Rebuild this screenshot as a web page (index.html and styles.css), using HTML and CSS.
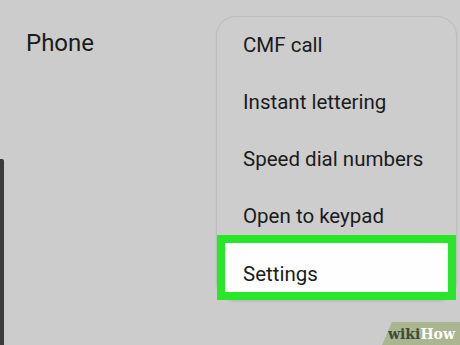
FILE: index.html
```html
<!DOCTYPE html>
<html>
<head>
<meta charset="utf-8">
<link rel="stylesheet" href="styles.css">
</head>
<body>
<div class="screen">
  <div class="side">
    <div class="title">Phone</div>
    <div class="edge"></div>
  </div>
  <div class="menu">
    <div class="item">CMF call</div>
    <div class="item">Instant lettering</div>
    <div class="item">Speed dial numbers</div>
    <div class="item">Open to keypad</div>
    <div class="item selected">Settings</div>
  </div>
  <div class="wm"><span class="wiki">wiki</span><span class="how">How</span></div>
</div>
</body>
</html>
```
FILE: styles.css
```css
html, body {
  margin: 0;
  padding: 0;
}
body {
  background: #cccccc;
  font-family: Roboto, "Liberation Sans", sans-serif;
  color: #1b1b1b;
}
.screen {
  position: relative;
  width: 460px;
  height: 345px;
  overflow: hidden;
  display: grid;
  grid-template-columns: 216px 241px;
  align-items: start;
}
.side {
  height: 345px;
  display: flex;
  flex-direction: column;
}
.title {
  font-size: 24px;
  line-height: 28px;
  padding: 29px 0 0 26px;
}
.edge {
  margin-top: auto;
  width: 4px;
  height: 186px;
  background: #3a3a3a;
  border-radius: 0 2px 0 0;
}
.menu {
  margin-top: 16px;
  background: #cdcdcd;
  border: 1px solid #bdbdbd;
  border-radius: 20px;
  box-shadow: 0 1px 2px rgba(0,0,0,0.08);
}
.item {
  height: 57px;
  line-height: 57px;
  font-size: 20.5px;
  padding-left: 26px;
  white-space: nowrap;
}
.item.selected {
  margin-top: -10px;
  height: 35px;
  line-height: 35px;
  padding-top: 14px;
  padding-left: 18px;
  background: #fefefe;
  border: 8px solid #2ae62a;
  margin-left: 0;
}
.wm {
  position: absolute;
  right: 0;
  bottom: 0;
  width: 78px;
  height: 23px;
  background: #a9b690;
  clip-path: polygon(10px 0, 100% 0, 100% 100%, 0 100%);
  font-family: "DejaVu Serif", "Liberation Serif", serif;
  font-weight: bold;
  font-size: 14px;
  line-height: 24px;
  padding-left: 6px;
  box-sizing: border-box;
  white-space: nowrap;
}
.wiki { color: #3f4a38; }
.how { color: #ffffff; }
```
